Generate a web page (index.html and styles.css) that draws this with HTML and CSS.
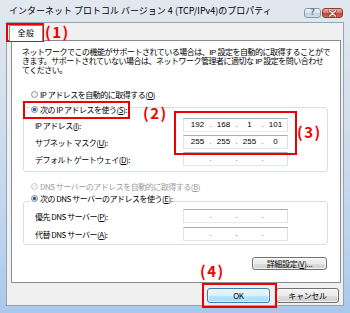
FILE: index.html
```html
<!DOCTYPE html>
<html lang="ja">
<head>
<meta charset="utf-8">
<title>TCP/IPv4 のプロパティ</title>
<link rel="stylesheet" href="styles.css">
</head>
<body>
<div class="window">
  <div class="titlebar">
    <span class="title">インターネット プロトコル バージョン 4 (TCP/IPv4)のプロパティ</span>
    <div class="caption-btns">
      <span class="cap-btn help">?</span>
      <span class="cap-btn close"><svg width="9" height="7" viewBox="0 0 9 7"><path d="M1.5 0.8 L7.5 6.2 M7.5 0.8 L1.5 6.2" stroke="#5a1d17" stroke-width="2.4" stroke-linecap="round"/><path d="M1.5 0.8 L7.5 6.2 M7.5 0.8 L1.5 6.2" stroke="#fff" stroke-width="1.4" stroke-linecap="round"/></svg></span>
    </div>
  </div>
  <div class="client">
    <div class="tabs"><span class="tab">全般</span></div>
    <div class="panel">
      <div class="desc">
        <div class="desc-line">ネットワークでこの機能がサポートされている場合は、IP 設定を自動的に取得することがで</div>
        <div class="desc-line">きます。サポートされていない場合は、ネットワーク管理者に適切な IP 設定を問い合わせ</div>
        <div class="desc-line">てください。</div>
      </div>
      <div class="radio-row rr-ip"><svg class="radio" width="7" height="7" viewBox="0 0 7 7"><circle cx="3.5" cy="3.5" r="3" fill="#f1f2f4" stroke="#8c949d"/></svg><span>IP アドレスを自動的に取得する(<u>O</u>)</span></div>
      <div class="group group-ip">
        <div class="legend"><svg class="radio" width="7" height="7" viewBox="0 0 7 7"><circle cx="3.5" cy="3.5" r="3" fill="#eef1f4" stroke="#7d8894"/><circle cx="3.5" cy="3.5" r="1.7" fill="#2a5f8f"/></svg><span>次の IP アドレスを使う(<u>S</u>):</span></div>
        <div class="field">
          <span class="label">IP アドレス(<u>I</u>):</span>
          <span class="ipbox"><span class="seg">192</span><span class="dot">.</span><span class="seg">168</span><span class="dot">.</span><span class="seg">1</span><span class="dot">.</span><span class="seg">101</span></span>
        </div>
        <div class="field">
          <span class="label">サブネット マスク(<u>U</u>):</span>
          <span class="ipbox"><span class="seg">255</span><span class="dot">.</span><span class="seg">255</span><span class="dot">.</span><span class="seg">255</span><span class="dot">.</span><span class="seg">0</span></span>
        </div>
        <div class="field">
          <span class="label">デフォルト ゲートウェイ(<u>D</u>):</span>
          <span class="ipbox"><span class="seg"></span><span class="dot">.</span><span class="seg"></span><span class="dot">.</span><span class="seg"></span><span class="dot">.</span><span class="seg"></span></span>
        </div>
      </div>
      <div class="radio-row rr-dns disabled"><svg class="radio" width="7" height="7" viewBox="0 0 7 7"><circle cx="3.5" cy="3.5" r="3" fill="#f4f4f4" stroke="#c6c9cc"/></svg><span>DNS サーバーのアドレスを自動的に取得する(<u>B</u>)</span></div>
      <div class="group group-dns">
        <div class="legend"><svg class="radio" width="7" height="7" viewBox="0 0 7 7"><circle cx="3.5" cy="3.5" r="3" fill="#eef1f4" stroke="#7d8894"/><circle cx="3.5" cy="3.5" r="1.7" fill="#2a5f8f"/></svg><span>次の DNS サーバーのアドレスを使う(<u>E</u>):</span></div>
        <div class="field">
          <span class="label">優先 DNS サーバー(<u>P</u>):</span>
          <span class="ipbox"><span class="seg"></span><span class="dot">.</span><span class="seg"></span><span class="dot">.</span><span class="seg"></span><span class="dot">.</span><span class="seg"></span></span>
        </div>
        <div class="field">
          <span class="label">代替 DNS サーバー(<u>A</u>):</span>
          <span class="ipbox"><span class="seg"></span><span class="dot">.</span><span class="seg"></span><span class="dot">.</span><span class="seg"></span><span class="dot">.</span><span class="seg"></span></span>
        </div>
      </div>
      <div class="adv-row"><span class="btn btn-adv">詳細設定(<u>V</u>)...</span></div>
    </div>
    <div class="dialog-btns">
      <span class="btn btn-default">OK</span>
      <span class="btn">キャンセル</span>
    </div>
  </div>

  <div class="mark box1"></div>
  <span class="mark-label lbl1">(1)</span>
  <div class="mark box2"></div>
  <span class="mark-label lbl2">(2)</span>
  <div class="mark box3"></div>
  <span class="mark-label lbl3">(3)</span>
  <div class="mark box4"></div>
  <span class="mark-label lbl4">(4)</span>
</div>
</body>
</html>
```

FILE: styles.css
```css
* { box-sizing: border-box; margin: 0; padding: 0; }
html, body { width: 350px; height: 313px; overflow: hidden; background: #fff; }
body {
  font-family: "Noto Sans CJK JP", "Noto Sans", sans-serif;
  font-size: 8px;
  color: #000;
}
u { text-decoration: underline; text-underline-offset: 1px; }

.window {
  position: relative;
  width: 350px;
  height: 313px;
  padding: 0 6px 7px 6px;
  display: flex;
  flex-direction: column;
  background: linear-gradient(180deg, #e2e8ef 0%, #d3dfec 35%, #bcd4ee 75%, #a9c8ec 100%);
}

/* title bar */
.titlebar {
  height: 22px;
  display: flex;
  align-items: flex-start;
}
.title {
  font-size: 9px;
  line-height: 12px;
  margin: 5px 0 0 3px;
  white-space: nowrap;
  color: #000;
}
.caption-btns {
  margin: 8px 1px 0 auto;
  display: flex;
  gap: 1px;
}
.cap-btn {
  height: 10px;
  display: flex;
  align-items: center;
  justify-content: center;
  border-radius: 3px;
}
.help {
  width: 17px;
  border: 1px solid #8496ac;
  background: linear-gradient(180deg, #eef3f8 0%, #dae4ef 50%, #c3d3e5 51%, #cfdceb 100%);
  color: #6b7a8c;
  font-family: "DejaVu Sans", sans-serif;
  font-weight: bold;
  font-size: 8px;
  line-height: 8px;
}
.close {
  width: 21px;
  border: 1px solid #8d3b31;
  background: linear-gradient(180deg, #e9a99c 0%, #d8796b 50%, #c2422f 51%, #d26a52 100%);
}

/* client area */
.client {
  flex: 1;
  border: 1px solid #95a3b3;
  background: #f0f0f0;
  display: flex;
  flex-direction: column;
}
.tabs {
  height: 17px;
  display: flex;
  align-items: flex-end;
  padding-left: 2px;
}
.tab {
  position: relative;
  z-index: 1;
  width: 34px;
  height: 16px;
  margin-bottom: -1px;
  border: 1px solid #898c95;
  border-bottom: none;
  background: #fff;
  text-align: center;
  line-height: 14px;
  letter-spacing: 0.5px;
}
.panel {
  height: 243px;
  margin: 0 2px 0 4px;
  border: 1px solid #898c95;
  background: #fff;
  padding: 7px 12px 0 10px;
  display: flex;
  flex-direction: column;
}
.desc {
  display: flex;
  flex-direction: column;
  font-family: "Liberation Sans", "Noto Sans CJK JP", sans-serif;
  letter-spacing: -0.5px;
  white-space: nowrap;
}
.desc-line {
  height: 9px;
  line-height: 9px;
}

.radio-row, .legend {
  height: 12px;
  display: flex;
  align-items: center;
  gap: 2px;
  letter-spacing: -0.5px;
  white-space: nowrap;
}
.radio { flex: none; }
.rr-ip { margin: 13px 0 0 9px; }
.rr-dns { margin: 8px 0 0 9px; }
.disabled { color: #9b9b9b; }

.group {
  margin-left: 1px;
  border: 1px solid #d5dfe5;
  border-radius: 3px;
  display: flex;
  flex-direction: column;
}
.group-ip { margin-top: 7px; padding-bottom: 5px; gap: 3px; }
.group-dns { margin-top: 9px; padding-bottom: 3px; gap: 4px; }
.legend {
  align-self: flex-start;
  margin-left: 6px;
  padding: 0 1px;
  background: #fff;
}
.group-ip .legend { margin-top: -5px; margin-bottom: 0; }
.group-dns .legend { margin-top: -10px; margin-bottom: 1px; }

.field {
  height: 14px;
  display: flex;
  align-items: center;
  padding-left: 11px;
  padding-right: 39px;
  letter-spacing: -0.5px;
  white-space: nowrap;
}
.ipbox {
  margin-left: auto;
  width: 105px;
  height: 14px;
  border: 1px solid;
  border-color: #abadb3 #dbdfe6 #e3e9ef #e2e3ea;
  background: #fff;
  display: flex;
  align-items: center;
  padding-left: 3px;
  font-family: "Liberation Sans", sans-serif;
  font-size: 8px;
  letter-spacing: 0;
}
.seg { width: 21px; text-align: center; line-height: 12px; }
.dot { width: 5px; text-align: center; line-height: 12px; color: #555; }

.adv-row {
  margin-top: 12px;
  display: flex;
  justify-content: flex-end;
  padding-right: 1px;
}
.btn {
  width: 63px;
  height: 15px;
  border: 1px solid #707070;
  border-radius: 3px;
  background: linear-gradient(180deg, #f4f4f4 0%, #ebebeb 50%, #dddddd 51%, #cfcfcf 100%);
  box-shadow: inset 0 0 0 1px rgba(255, 255, 255, 0.7);
  display: flex;
  align-items: center;
  justify-content: center;
  letter-spacing: -0.3px;
  white-space: nowrap;
}
.btn-adv { width: 75px; height: 13px; }
.btn-default {
  border-color: #3c7fb1;
  background: linear-gradient(180deg, #eaf6fd 0%, #d9f0fc 50%, #bee6fd 51%, #a7d9f5 100%);
  box-shadow: inset 0 0 0 1px rgba(255, 255, 255, 0.6);
}

.dialog-btns {
  margin-top: 5px;
  display: flex;
  justify-content: flex-end;
  gap: 6px;
  padding-right: 4px;
}

/* red annotations overlay */
.mark {
  position: absolute;
  border: 2px solid #ee0000;
}
.box1 { left: 6px; top: 23px; width: 38px; height: 19px; }
.box2 { left: 23px; top: 101px; width: 107px; height: 18px; }
.box3 { left: 174px; top: 111px; width: 123px; height: 44px; }
.box4 { left: 202px; top: 283px; width: 75px; height: 25px; }
.mark-label {
  position: absolute;
  color: #ee0000;
  font-family: "Noto Sans CJK JP", sans-serif;
  font-weight: bold;
  font-size: 15px;
  line-height: 16px;
  letter-spacing: 1.5px;
  white-space: nowrap;
}
.lbl1 { left: 45px; top: 24px; }
.lbl2 { left: 143px; top: 105px; }
.lbl3 { left: 297px; top: 124px; }
.lbl4 { left: 200px; top: 263px; }
```
